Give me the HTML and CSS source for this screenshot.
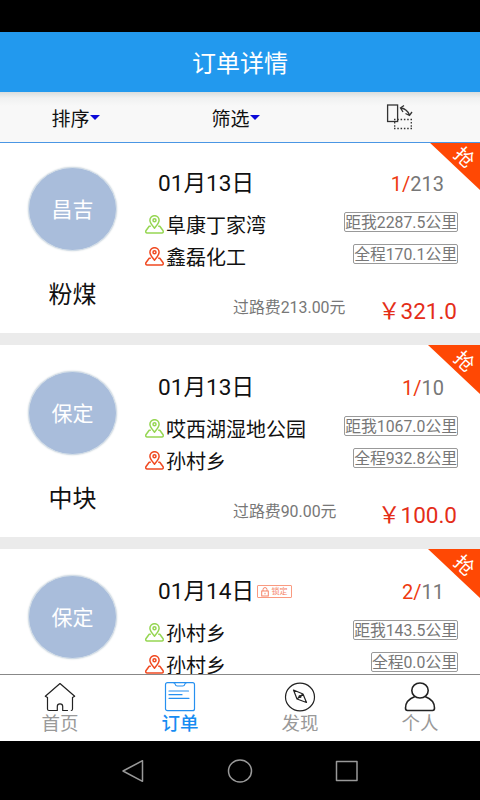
FILE: index.html
```html
<!DOCTYPE html>
<html lang="zh-CN">
<head>
<meta charset="utf-8">
<title>订单详情</title>
<link rel="stylesheet" href="styles.css">
</head>
<body>
<svg class="defs" width="0" height="0">
  <symbol id="pin" viewBox="0 0 19 19">
    <path d="M9.500 13.200C7 10.200 4.900 8 4.900 5.300a4.600 4.600 0 0 1 9.200 0c0 2.700-2.100 4.900-4.600 7.900z"/>
    <circle cx="9.500" cy="5.300" r="1.500"/>
    <path d="M5.800 11.200H4.200L.9 15.700q-.6 2.200 1.200 2.200h14.800q1.800 0 1.200-2.200l-3.300-4.500h-1.600"/>
  </symbol>
</svg>
<div class="status"></div>
<header class="header">订单详情</header>
<div class="filters">
  <div class="filter">排序<i class="caret"></i></div>
  <div class="filter">筛选<i class="caret"></i></div>
  <div class="filter">
    <svg class="swap" width="28" height="26" viewBox="0 0 28 26" fill="none" stroke="#333" stroke-width="1.300">
      <rect x="1.600" y="1" width="10" height="16.500"/>
      <path d="M15 4q6 1 8.500 7M18 1.500L14.500 4l2.500 4M19.500 9.500l4 2 2.500-3.500"/>
      <path d="M8 15.500h18M8 24.500h18M8.700 18v5M25.300 18v5" stroke-dasharray="1.500 1.800"/>
    </svg>
  </div>
</div>
<main class="viewport">
  <div class="list">
    <article class="card">
      <div class="cargo"><div class="city">昌吉</div><div class="kind">粉煤</div></div>
      <div class="info">
        <div class="top"><span class="date">01月13日</span><span class="count"><b>1/</b>213</span></div>
        <div class="place"><svg class="pin from"><use href="#pin"/></svg><span class="name">阜康丁家湾</span><span class="tag">距我2287.5公里</span></div>
        <div class="place"><svg class="pin to"><use href="#pin"/></svg><span class="name">鑫磊化工</span><span class="tag">全程170.1公里</span></div>
        <div class="cost"><span class="toll">过路费213.00元</span><span class="price">￥321.0</span></div>
      </div>
      <div class="corner"><span>抢</span></div>
    </article>
    <article class="card">
      <div class="cargo"><div class="city">保定</div><div class="kind">中块</div></div>
      <div class="info">
        <div class="top"><span class="date">01月13日</span><span class="count"><b>1/</b>10</span></div>
        <div class="place"><svg class="pin from"><use href="#pin"/></svg><span class="name">哎西湖湿地公园</span><span class="tag">距我1067.0公里</span></div>
        <div class="place"><svg class="pin to"><use href="#pin"/></svg><span class="name">孙村乡</span><span class="tag">全程932.8公里</span></div>
        <div class="cost"><span class="toll">过路费90.00元</span><span class="price">￥100.0</span></div>
      </div>
      <div class="corner"><span>抢</span></div>
    </article>
    <article class="card">
      <div class="cargo"><div class="city">保定</div></div>
      <div class="info">
        <div class="top"><span class="date">01月14日</span><span class="lock"><svg width="8" height="10" viewBox="0 0 8 10" fill="none" stroke="currentColor"><rect x=".7" y="4" width="6.600" height="5"/><path d="M2 4V2.600a2 2 0 0 1 4 0V4M4 5.800v1.500"/></svg>锁定</span><span class="count"><b>2/</b>11</span></div>
        <div class="place"><svg class="pin from"><use href="#pin"/></svg><span class="name">孙村乡</span><span class="tag">距我143.5公里</span></div>
        <div class="place"><svg class="pin to"><use href="#pin"/></svg><span class="name">孙村乡</span><span class="tag">全程0.0公里</span></div>
      </div>
      <div class="corner"><span>抢</span></div>
    </article>
  </div>
</main>
<nav class="tabs">
  <div class="tab">
    <svg width="32" height="30" viewBox="0 0 32 30" fill="none" stroke="#222" stroke-width="1.200" stroke-linejoin="round" stroke-linecap="round"><path d="M3.500 15.500L1.300 14.200 16 1.500l14.700 12.700-2.200 1.300V27q0 1.500-1.200 1.500M23.500 28.500h-4.800v-4a2.700 2.700 0 0 0-5.400 0v4H5q-1.500 0-1.500-1.500V15.500"/></svg>
    <span>首页</span>
  </div>
  <div class="tab active">
    <svg width="32" height="30" viewBox="0 0 32 30" fill="none" stroke="#2690f0" stroke-width="1.200" stroke-linecap="round"><rect x="1.500" y=".7" width="29" height="28" rx="2"/><path d="M10 1q1 0 1.300 1.500t2 1.500h5.400q1.700 0 2-1.500T22 1M5 9h19.500M5 12.700h13M5 16.300h20"/></svg>
    <span>订单</span>
  </div>
  <div class="tab">
    <svg width="32" height="30" viewBox="0 0 32 30" fill="none" stroke="#222" stroke-width="1.200" stroke-linejoin="round"><ellipse cx="16" cy="15" rx="14.500" ry="13.800"/><path d="M9.500 8l9.500 4 3.500 8.500-9.500-3.500zM13 17l6-5"/><circle cx="16" cy="14.500" r="1"/></svg>
    <span>发现</span>
  </div>
  <div class="tab">
    <svg width="32" height="30" viewBox="0 0 32 30" fill="none" stroke="#222" stroke-width="1.600" stroke-linejoin="round"><ellipse cx="16" cy="8.500" rx="8.200" ry="7.500"/><path d="M11 14.500Q1.500 18 1.500 26q0 2.500 2 2.500h25q2 0 2-2.500 0-8-9.500-11.500"/></svg>
    <span>个人</span>
  </div>
</nav>
<div class="keys">
  <svg width="24" height="24" viewBox="0 0 24 24"><path d="M21.500 1.700v20.600L2 12z"/></svg>
  <svg width="26" height="24" viewBox="0 0 26 24"><ellipse cx="13" cy="12" rx="11.500" ry="11"/></svg>
  <svg width="24" height="24" viewBox="0 0 24 24"><rect x="1.500" y="2.500" width="20.500" height="19"/></svg>
</div>
</body>
</html>
```
FILE: styles.css
```css
* { box-sizing: border-box; }
html, body { height: 100%; }
body {
  margin: 0;
  display: flex;
  flex-direction: column;
  overflow: hidden;
  background: #000;
  color: #111;
  font-family: Roboto, "Noto Sans CJK SC", sans-serif;
  white-space: nowrap;
}
svg { display: block; flex: none; }
.defs { position: absolute; }
.status { flex: none; height: 32px; }
.header {
  flex: none;
  height: 60px;
  background: #2299ee;
  color: #fff;
  font-size: 24px;
  line-height: 64px;
  text-align: center;
}
.filters {
  flex: none;
  display: flex;
  height: 51px;
  background: linear-gradient(#d9dddd, #f0f1f1 6px, #f8f8f8 14px);
  border-bottom: 1px solid #4a96e4;
}
.filter {
  flex: none;
  width: 160px;
  display: flex;
  align-items: center;
  justify-content: center;
  font-size: 19px;
  padding-right: 9px;
}
.filter:last-child { padding: 0; }
.caret {
  border: 5.5px solid transparent;
  border-top: 5.5px solid #0b08d8;
  border-bottom: 0;
}
.viewport {
  flex: none;
  height: 531px;
  overflow: hidden;
  background: #ebebeb;
}
.list {
  display: flex;
  flex-direction: column;
  gap: 12px;
  margin-top: -2px;
}
.card {
  position: relative;
  display: flex;
  flex: none;
  height: 192px;
  background: #fff;
}
.cargo {
  width: 145px;
  display: flex;
  flex-direction: column;
  align-items: center;
  padding-top: 26px;
}
.city {
  width: 89px;
  height: 84px;
  border: 1px solid #d4dfe9;
  border-radius: 50%;
  background: #a9bddb;
  box-shadow: 0 0 2px #c7d0d6;
  color: #fff;
  font-size: 21px;
  line-height: 84px;
  text-align: center;
}
.kind { margin-top: 26px; font-size: 24px; line-height: 36px; }
.info { flex: 1; padding: 24px 22px 0 0; }
.top {
  display: flex;
  align-items: center;
  height: 32px;
  margin-bottom: 12px;
  padding: 0 14px 0 13px;
}
.date { font-size: 22.6px; }
.count { margin-left: auto; font-size: 20px; color: #777; padding-top: 5px; }
.count b { font-weight: 400; color: #ee3a10; }
.lock {
  display: flex;
  align-items: center;
  justify-content: center;
  gap: 2px;
  width: 35px;
  height: 13px;
  margin: 5px 0 0 3px;
  border: 1px solid #fa9a80;
  border-radius: 1px;
  color: #f58468;
  font-size: 8px;
  line-height: 11px;
}
.place { display: flex; align-items: center; height: 31.5px; }
.pin {
  width: 19px;
  height: 19px;
  margin-right: 2px;
  fill: none;
  stroke-width: 1.5;
  stroke-linejoin: round;
}
.from { stroke: #96d653; }
.to { stroke: #f04a22; }
.name { font-size: 20px; }
.tag {
  margin: -5px 0 0 auto;
  height: 20px;
  border: 1px solid #999;
  border-radius: 2px;
  color: #777;
  font-size: 15.8px;
  line-height: 20px;
}
.cost { display: flex; height: 32px; margin-top: 21px; align-items: center; }
.toll { margin: -6px 0 0 88px; font-size: 15.9px; color: #777; }
.price { margin: 0 1px 0 auto; font-size: 22.5px; color: #e42d18; }
.corner {
  position: absolute;
  top: 0;
  right: 0;
  width: 52px;
  height: 49px;
  background: #ff4804;
  clip-path: polygon(0 0, 100% 0, 100% 100%);
  color: #fff;
}
.corner span {
  position: absolute;
  left: 26px;
  top: 5px;
  font-size: 19.5px;
  line-height: 24px;
  transform: rotate(43deg);
}
.tabs {
  flex: none;
  display: flex;
  height: 67px;
  background: #fff;
  border-top: 1px solid #888;
}
.tab {
  flex: 1;
  display: flex;
  flex-direction: column;
  align-items: center;
  padding-top: 7px;
  color: #999;
  font-size: 18.5px;
  line-height: 25px;
}
.active { color: #168cf2; font-weight: 500; }
.keys {
  flex: 1;
  display: flex;
  align-items: center;
  justify-content: center;
  gap: 82px;
  fill: none;
  stroke: #999;
  stroke-width: 1.5;
  stroke-linejoin: round;
}
```
